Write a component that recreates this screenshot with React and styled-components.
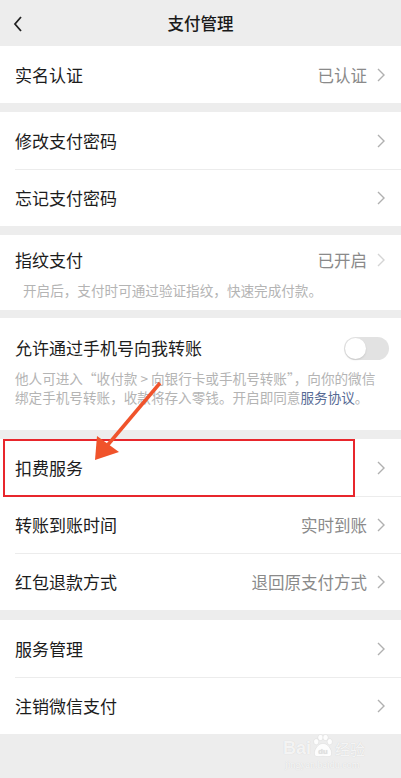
import React from 'react'
import styled, { createGlobalStyle } from 'styled-components'

const GlobalStyle = createGlobalStyle`
  body {
    margin: 0;
    font-family: "Noto Sans CJK SC", "Noto Sans", sans-serif;
    background: #ededed;
  }
`

const Page = styled.div`
  position: relative;
  width: 401px;
  height: 778px;
  background: #ededed;
  overflow: hidden;
`

const Header = styled.div`
  height: 46px;
  display: flex;
  align-items: center;
  justify-content: center;
  position: relative;
`

const BackButton = styled.div`
  position: absolute;
  left: 12px;
  top: 14px;
  width: 12px;
  height: 18px;
`

const Title = styled.h1`
  margin: 0;
  font-size: 16.5px;
  font-weight: 500;
  color: #1a1a1a;
`

const Group = styled.div`
  background: #fff;
  margin-bottom: ${(p) => p.gap || 9}px;
`

const Row = styled.div`
  height: ${(p) => p.h || 57}px;
  box-sizing: border-box;
  display: flex;
  align-items: center;
  padding: ${(p) => p.pad || '0 16px 0 15px'};
  position: relative;
  &:not(:first-child)::before {
    content: '';
    position: absolute;
    top: 0;
    left: 15px;
    right: 0;
    height: 1px;
    background: #ececec;
  }
`

const Label = styled.span`
  flex: 1;
  font-size: 17px;
  line-height: 24px;
  color: #1c1c1c;
`

const Value = styled.span`
  font-size: 16.5px;
  line-height: 24px;
  color: #8a8a8a;
  margin-right: 10px;
`

const Hint = styled.div`
  font-size: 13.6px;
  color: #b4b4b4;
  line-height: 19px;
  padding: ${(p) => p.pad || '0 15px'};
`

const Link = styled.span`
  color: #576b95;
`

const Toggle = styled.div`
  width: 45px;
  height: 23px;
  border-radius: 12px;
  background: #e2e2e2;
  box-sizing: border-box;
  padding: 1px;
  display: flex;
  align-items: center;
`

const Knob = styled.div`
  width: 21px;
  height: 21px;
  border-radius: 50%;
  background: #fff;
  box-shadow: 0 1px 2px rgba(0, 0, 0, 0.12);
`

const HighlightBox = styled.div`
  position: absolute;
  left: 3px;
  top: 439px;
  width: 348px;
  height: 54px;
  border: 2px solid #e8262c;
`

const ArrowLayer = styled.svg`
  position: absolute;
  left: 0;
  top: 0;
  pointer-events: none;
`

const Watermark = styled.div`
  position: absolute;
  left: 283px;
  top: 734px;
  color: rgba(255, 255, 255, 0.8);
  font-family: "Liberation Sans", sans-serif;
  text-shadow: 0 0 1px rgba(0, 0, 0, 0.15);
`

const WmMain = styled.div`
  display: flex;
  align-items: flex-end;
  font-size: 18px;
  font-weight: 700;
  line-height: 20px;
`

const WmCn = styled.span`
  font-family: "Noto Sans CJK SC", sans-serif;
  font-size: 15px;
  font-weight: 400;
  line-height: 18px;
`

const WmSub = styled.div`
  font-family: "Liberation Serif", serif;
  font-size: 10px;
  margin-top: 1px;
  padding-left: 2px;
`

const Chevron = ({ light }) => (
  <svg width="8" height="14" viewBox="0 0 8 14">
    <polyline
      points="1,1 7,7 1,13"
      fill="none"
      stroke={light ? '#d4d4d4' : '#b0b0b0'}
      strokeWidth="1.4"
    />
  </svg>
)

const Paw = () => (
  <svg width="22" height="24" viewBox="0 0 26 28" style={{ margin: '0 1px' }}>
    <g fill="rgba(255,255,255,0.85)" stroke="rgba(0,0,0,0.1)" strokeWidth="0.6">
      <ellipse cx="5" cy="9" rx="3" ry="3.6" />
      <ellipse cx="10" cy="4" rx="3" ry="3.6" />
      <ellipse cx="16" cy="4" rx="3" ry="3.6" />
      <ellipse cx="21" cy="9" rx="3" ry="3.6" />
      <path d="M13 11 C 7 11 2 19 3 24 C 4 28 10 26 13 26 C 16 26 22 28 23 24 C 24 19 19 11 13 11 Z" />
    </g>
    <text x="13" y="24" textAnchor="middle" fontSize="9" fontWeight="700" fill="#e0e0e0" fontFamily="Liberation Sans">du</text>
  </svg>
)

const Item = ({ label, value, light }) => (
  <Row>
    <Label>{label}</Label>
    {value && <Value>{value}</Value>}
    <Chevron light={light} />
  </Row>
)

export default function App() {
  return (
    <Page>
      <GlobalStyle />
      <Header>
        <BackButton>
          <svg width="12" height="18" viewBox="0 0 12 18">
            <polyline points="9,2 3,9 9,16" fill="none" stroke="#222" strokeWidth="1.8" />
          </svg>
        </BackButton>
        <Title>支付管理</Title>
      </Header>

      <Group>
        <Item label="实名认证" value="已认证" />
      </Group>

      <Group>
        <Item label="修改支付密码" />
        <Item label="忘记支付密码" />
      </Group>

      <Group gap={8}>
        <Row h={46} pad="4px 16px 0 15px">
          <Label>指纹支付</Label>
          <Value>已开启</Value>
          <Chevron light />
        </Row>
        <Hint pad="0 15px 10px 23px">开启后，支付时可通过验证指纹，快速完成付款。</Hint>
      </Group>

      <Group>
        <Row h={51} pad="9px 12px 0 15px">
          <Label>允许通过手机号向我转账</Label>
          <Toggle>
            <Knob />
          </Toggle>
        </Row>
        <Hint pad="0 15px 23px 15px">
          他人可进入“收付款 &gt; 向银行卡或手机号转账”，向你的微信绑定手机号转账，收款将存入零钱。开启即同意<Link>服务协议</Link>。
        </Hint>
      </Group>

      <Group gap={10}>
        <Item label="扣费服务" />
        <Item label="转账到账时间" value="实时到账" />
        <Item label="红包退款方式" value="退回原支付方式" />
      </Group>

      <Group>
        <Item label="服务管理" />
        <Item label="注销微信支付" />
      </Group>

      <HighlightBox />
      <ArrowLayer width="401" height="778">
        <line x1="160" y1="383" x2="106" y2="447" stroke="#f0532b" strokeWidth="3.5" />
        <polygon points="95,460 97,436 119,452" fill="#f0532b" />
      </ArrowLayer>

      <Watermark>
        <WmMain>
          Bai
          <Paw />
          <WmCn>经验</WmCn>
        </WmMain>
        <WmSub>jingyan.baidu.com</WmSub>
      </Watermark>
    </Page>
  )
}
